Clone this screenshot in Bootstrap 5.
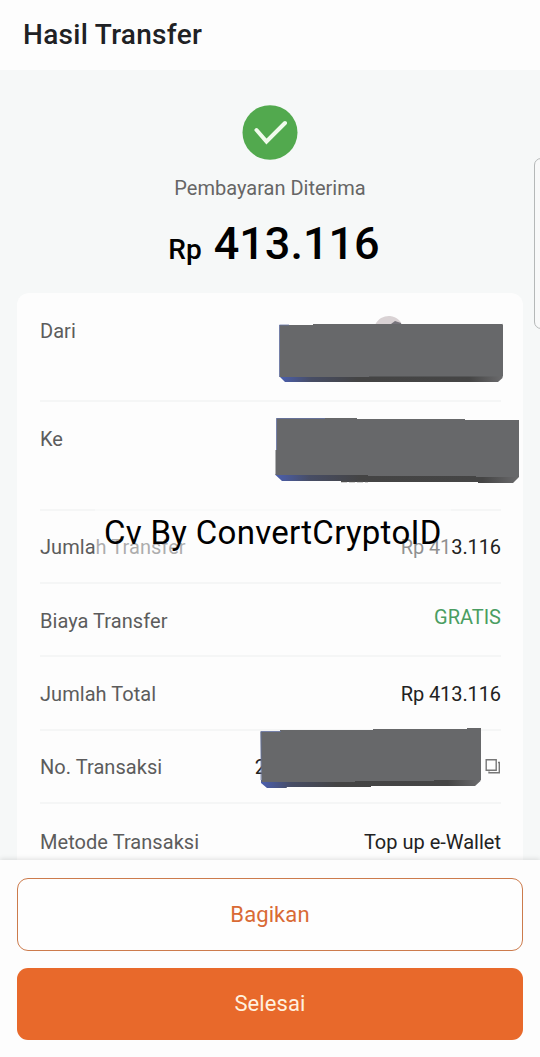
<!DOCTYPE html>
<html lang="id">
<head>
<meta charset="utf-8">
<meta name="viewport" content="width=device-width, initial-scale=1">
<title>Hasil Transfer</title>
<link href="https://cdn.jsdelivr.net/npm/bootstrap@5.3.0/dist/css/bootstrap.min.css" rel="stylesheet">
<style>
body{font-family:Roboto,sans-serif;background:#f6f8f8;color:#222;font-size:20px;line-height:24px}
.screen{width:540px;height:1057px}
.top-bar{height:70px;padding:0 23px;background:#fdfdfd}
.top-bar h1{font-size:28px;font-weight:500;letter-spacing:.3px;color:#202124}
.result{height:223px;padding-top:35px}
.status-text{margin-top:16px;color:#666;letter-spacing:0}
.amount{margin-top:19px;padding-left:8px;font-weight:500;color:#000;gap:12px;line-height:50px}
.amount .cur{font-size:28px}
.amount .num{font-size:45px}
.receipt{margin:0 17px;padding:0 22px 0 23px;background:#fdfdfd;border-radius:12px 12px 0 0;height:567px}
.entry{height:73.4px;border-bottom:2px solid #f5f6f6;padding-top:1.7px}
.entry.tall{height:108.8px;align-items:flex-start!important;padding-top:26px}
.entry.tall+.entry.tall{padding-top:25px}
.label-text{color:#5c5c5c;letter-spacing:.05px}
.price{letter-spacing:-.1px}
.free{color:#4a9d62;position:relative;top:-4px}
.cover{position:absolute;overflow:visible}
.veil{position:absolute;left:95px;top:506px;width:356px;height:58px;background:rgba(253,253,253,.5)}
.watermark{position:absolute;left:104px;top:513px;font-size:33px;letter-spacing:.29px;line-height:40px;color:#000;white-space:nowrap}
.edge-panel{position:absolute;left:533.5px;top:158px;width:20px;height:171px;border:1.5px solid #b5b8b8;border-radius:7px;background:#f8f9f9}
.actions{height:197px;padding:18px 17px 0;gap:17px;background:#fdfdfd;box-shadow:0 -1px 5px rgba(0,0,0,.12)}
.actions .btn{height:72.5px;border-radius:11px;font-size:22px;letter-spacing:.1px;padding:0}
.actions .btn-share{border:1.5px solid #cc7b4c;color:#d96a35;background:#fefefe}
.actions .btn-done{background:#e8692b;color:#fff1df;border:0}
</style>
</head>
<body>
<div class="screen position-relative overflow-hidden d-flex flex-column">
  <header class="top-bar d-flex align-items-center flex-shrink-0"><h1 class="m-0">Hasil Transfer</h1></header>
  <section class="result d-flex flex-column align-items-center flex-shrink-0">
    <svg width="56" height="55" viewBox="0 0 56 55"><ellipse cx="28" cy="27.5" rx="27.5" ry="27.3" fill="#52a94e"/><path d="M14.5 25 24.5 36.5 43 18" fill="none" stroke="#f1fbec" stroke-width="4" stroke-linecap="round" stroke-linejoin="miter"/></svg>
    <div class="status-text">Pembayaran Diterima</div>
    <div class="amount d-flex align-items-baseline"><span class="cur">Rp</span><span class="num">413.116</span></div>
  </section>
  <main class="receipt flex-shrink-0 overflow-hidden">
    <div class="entry tall d-flex justify-content-between"><span class="label-text">Dari</span></div>
    <div class="entry tall d-flex justify-content-between"><span class="label-text">Ke</span></div>
    <div class="entry d-flex align-items-center justify-content-between"><span class="label-text">Jumlah Transfer</span><span class="price">Rp 413.116</span></div>
    <div class="entry d-flex align-items-center justify-content-between"><span class="label-text">Biaya Transfer</span><span class="free">GRATIS</span></div>
    <div class="entry d-flex align-items-center justify-content-between"><span class="label-text">Jumlah Total</span><span class="price">Rp 413.116</span></div>
    <div class="entry d-flex align-items-center"><span class="label-text">No. Transaksi</span><span class="ms-auto" style="margin-right:219px">2</span>
      <svg width="16" height="16" viewBox="0 0 16 16" fill="none" stroke="#777" stroke-width="1.4"><path d="M1.2.8h10v10.400h-10zM13 3.500h1.300v10.300H4V12.500"/></svg></div>
    <div class="entry d-flex align-items-center justify-content-between border-0"><span class="label-text">Metode Transaksi</span><span>Top up e-Wallet</span></div>
  </main>
  <footer class="actions d-flex flex-column position-relative flex-shrink-0">
    <button class="btn btn-share w-100" type="button">Bagikan</button>
    <button class="btn btn-done w-100" type="button">Selesai</button>
  </footer>

  <div class="veil"></div>
  <div class="watermark">Cv By ConvertCryptoID</div>
  <div class="edge-panel"></div>

  <!-- redaction blocks with their bevelled lower edge -->
  <svg class="cover" style="left:275px;top:314px" width="230" height="70" viewBox="275 314 230 70">
    <defs><linearGradient id="bevel"><stop offset="0" stop-color="#4b5fae"/><stop offset=".14" stop-color="#474d65"/><stop offset=".35" stop-color="#444"/><stop offset=".85" stop-color="#454545"/><stop offset="1" stop-color="#6b6b6d"/></linearGradient></defs>
    <path d="M375 325C378 318 385 315.500 390 316 397 317 401 321 402 325z" fill="#d9d2d4"/><path d="M391 324l4-3 6 2v1z" fill="#77747b"/>
    <path d="M280 376H502.500V378L498 382H285L280 377z" fill="url(#bevel)"/>
    <path d="M279.500 325H313V324H502V323.500L503 325V376.500H369V377H279.500z" fill="#67686a"/>
    <path d="M279.500 377V325H289" fill="none" stroke="#6674a5" stroke-width=".8"/>
  </svg>
  <svg class="cover" style="left:275px;top:417px" width="245" height="68" viewBox="275 417 245 68">
    <path d="M275.500 474H519V477L513 483H478V482H341V481H282L275.500 475z" fill="url(#bevel)"/>
    <path d="M276.500 418H357V419H465V420H519V477H476V476H368V475H275.500V450H276.500z" fill="#67686a"/>
    <path d="M276.500 450V418.500H325" fill="none" stroke="#6674a5" stroke-width=".8"/>
    <path d="M341 481.500h27" stroke="#4c4c4c" stroke-width="1.500" stroke-dasharray="6 2"/>
  </svg>
  <svg class="cover" style="left:260px;top:727px" width="222" height="62" viewBox="260 727 222 62">
    <path d="M261 780H480.500V781L475 786H371V787H287L286.500 788H267L261 783z" fill="url(#bevel)"/>
    <path d="M260.500 731.500H280V730H373V729H467V728H481V780H434V781H355V782H261.500z" fill="#67686a"/>
    <path d="M261 780V731.500H281" fill="none" stroke="#6674a5" stroke-width=".8"/>
  </svg>
</div>
<script src="https://cdn.jsdelivr.net/npm/bootstrap@5.3.0/dist/js/bootstrap.bundle.min.js"></script>
</body>
</html>
